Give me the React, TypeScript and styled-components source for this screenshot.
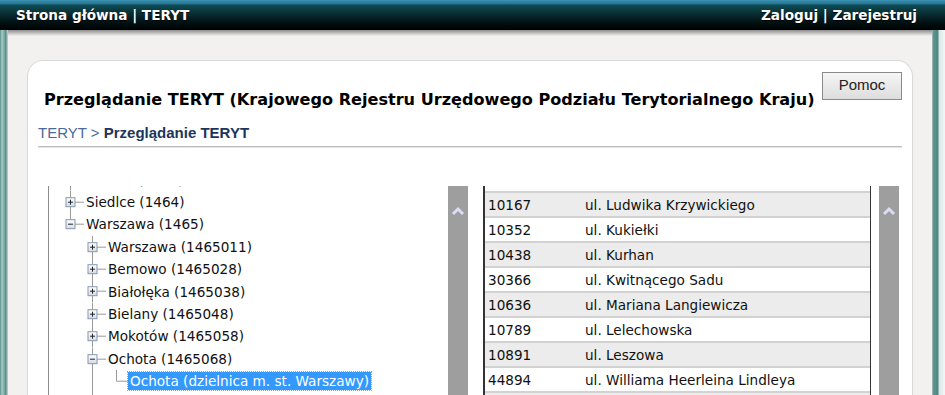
import React from 'react';
import styled, { createGlobalStyle } from 'styled-components';

const GlobalStyle = createGlobalStyle`
  html, body {
    margin: 0;
    padding: 0;
    overflow: hidden;
    background: #f2f1ef;
  }
  body {
    font-family: "DejaVu Sans", Verdana, sans-serif;
  }
`;

type TreeRow = {
  label: string;
  lines: boolean[];
  hasNext: boolean;
  icon: 'plus' | 'minus' | 'leaf';
  selected?: boolean;
};

const treeRows: TreeRow[] = [
  { label: 'Radom (1463)', lines: [], hasNext: true, icon: 'plus' },
  { label: 'Siedlce (1464)', lines: [], hasNext: true, icon: 'plus' },
  { label: 'Warszawa (1465)', lines: [], hasNext: false, icon: 'minus' },
  { label: 'Warszawa (1465011)', lines: [false], hasNext: true, icon: 'plus' },
  { label: 'Bemowo (1465028)', lines: [false], hasNext: true, icon: 'plus' },
  { label: 'Białołęka (1465038)', lines: [false], hasNext: true, icon: 'plus' },
  { label: 'Bielany (1465048)', lines: [false], hasNext: true, icon: 'plus' },
  { label: 'Mokotów (1465058)', lines: [false], hasNext: true, icon: 'plus' },
  { label: 'Ochota (1465068)', lines: [false], hasNext: true, icon: 'minus' },
  { label: 'Ochota (dzielnica m. st. Warszawy)', lines: [false, true], hasNext: false, icon: 'leaf', selected: true },
  { label: 'Praga-Południe (1465078)', lines: [false], hasNext: true, icon: 'plus' },
];

const streets = [
  ['10167', 'ul. Ludwika Krzywickiego'],
  ['10352', 'ul. Kukiełki'],
  ['10438', 'ul. Kurhan'],
  ['30366', 'ul. Kwitnącego Sadu'],
  ['10636', 'ul. Mariana Langiewicza'],
  ['10789', 'ul. Lelechowska'],
  ['10891', 'ul. Leszowa'],
  ['44894', 'ul. Williama Heerleina Lindleya'],
  ['11262', 'ul. Łęczycka'],
];

const ROW_H = 22.4;
const LINE = '#9a9a9a';

const Page = styled.div`
  display: flex;
  flex-direction: column;
  height: 395px;
  width: 945px;
`;

const TopBar = styled.div`
  height: 30px;
  flex: none;
  display: flex;
  align-items: center;
  justify-content: space-between;
  padding: 0 28px 0 16px;
  background: linear-gradient(
    180deg,
    #3d93b3 0,
    #24718f 4px,
    #0e4b54 5px,
    #0a3439 12px,
    #031517 21px,
    #000 30px
  );
  color: #fff;
  font-family: "DejaVu Sans", Verdana, sans-serif;
  font-weight: bold;
  font-size: 13.6px;
  text-shadow: 0 1px 1px #000;
  box-sizing: border-box;
`;

const BarLinks = styled.div`
  margin-top: -1px;
`;

const Body = styled.div`
  flex: 1;
  display: flex;
  min-height: 0;
`;

const LeftEdge = styled.div`
  width: 8px;
  background: linear-gradient(90deg, #5b928d 0, #a7c9c3 2px, #7eb0a9 4px, #4f8883 6px, #b9c4c2 7px);
`;

const RightEdge = styled.div`
  width: 13px;
  background: linear-gradient(90deg, #c9cfce 0, #5f9790 1px, #4d857f 6px, #dce7e5 7px, #f4f7f7 13px);
`;

const Content = styled.div`
  flex: 1;
  background: #f2f1ef;
  display: flex;
  flex-direction: column;
  overflow: hidden;
`;

const Shade = styled.div`
  height: 6px;
  flex: none;
  background: linear-gradient(180deg, #8d8d8d, #f2f1ef);
`;

const Card = styled.div`
  margin: 24px 19px 0 19px;
  background: #fff;
  border: 1px solid #d9d9d9;
  border-bottom: none;
  border-radius: 16px 16px 0 0;
  padding: 11px 10px 0 10px;
  flex: 1;
`;

const Header = styled.div`
  display: flex;
  justify-content: space-between;
  align-items: flex-start;
  height: 37px;
`;

const Title = styled.h1`
  margin: 19px 0 0 6px;
  font-family: "DejaVu Sans", Verdana, sans-serif;
  font-size: 16.1px;
  line-height: 18px;
  font-weight: bold;
  color: #000;
  white-space: nowrap;
`;

const HelpButton = styled.button`
  width: 80px;
  height: 28px;
  flex: none;
  border: 1px solid #8a8a8a;
  background: linear-gradient(180deg, #f6f6f6, #dddddd);
  font-family: "Liberation Sans", Arial, sans-serif;
  font-size: 15px;
  color: #222;
  padding: 0 0 3px 0;
  margin: 0;
`;

const Crumbs = styled.div`
  margin-top: 15px;
  line-height: 18px;
  font-family: "Liberation Sans", Arial, sans-serif;
  font-size: 15px;
  color: #4a6a98;
`;

const CrumbCurrent = styled.span`
  color: #1c355c;
  font-weight: bold;
`;

const Rule = styled.div`
  margin-top: 4px;
  border-top: 1px solid #bdbdbd;
  border-bottom: 1px solid #e4e4e4;
`;

const Panels = styled.div`
  margin: 38px 0 0 10px;
  display: flex;
  height: 260px;
`;

const TreeBox = styled.div`
  width: 389px;
  border-left: 1px solid #8c8c8c;
  padding-left: 10px;
  overflow: hidden;
`;

const TreeList = styled.div`
  margin-top: -17.6px;
`;

const Row = styled.div`
  display: flex;
  align-items: center;
  height: ${ROW_H}px;
  font-size: 13.6px;
  color: #111;
  white-space: nowrap;
`;

const Label = styled.span<{ $selected?: boolean }>`
  line-height: 18px;
  padding: 0 2px;
  margin-left: -2px;
  background: ${(p) => (p.$selected ? '#3399ff' : 'transparent')};
  color: ${(p) => (p.$selected ? '#fff' : '#111')};
  outline: ${(p) => (p.$selected ? '1px dotted #7fa7d8' : 'none')};
`;

const Scroll = styled.div<{ $gap: number }>`
  width: 20px;
  flex: none;
  margin-left: ${(p) => p.$gap}px;
  background: #9e9e9e;
  display: flex;
  justify-content: center;
  align-items: flex-start;
  padding-top: 20px;
  box-sizing: border-box;
`;

const TableBox = styled.div`
  width: 385px;
  flex: none;
  margin-left: 15px;
  border-left: 2px solid #333;
  border-right: 1px solid #333;
  padding-top: 5px;
`;

const Table = styled.table`
  width: 100%;
  border-collapse: collapse;
  font-family: "DejaVu Sans", Verdana, sans-serif;
  font-size: 13.6px;
  color: #111;
`;

const Tr = styled.tr<{ $odd: boolean }>`
  height: 25px;
  background: ${(p) => (p.$odd ? '#ececec' : '#fff')};
  border-top: 2px solid #d2d2d2;
`;

const Code = styled.td`
  width: 97px;
  padding: 0 0 0 3px;
`;

const Name = styled.td`
  padding: 0;
  white-space: nowrap;
`;

const Indent = ({ line }: { line: boolean }) => (
  <svg width="22" height={ROW_H} viewBox={`0 0 22 ${ROW_H}`} style={{ flex: 'none' }}>
    {line && <line x1="11.5" y1="0" x2="11.5" y2={ROW_H} stroke={LINE} />}
  </svg>
);

const Connector = ({ icon, hasNext }: { icon: TreeRow['icon']; hasNext: boolean }) => {
  const mid = ROW_H / 2;
  const cx = icon === 'leaf' ? 13.5 : 11.5;
  return (
    <svg width="27" height={ROW_H} viewBox={`0 0 27 ${ROW_H}`} style={{ flex: 'none' }}>
      <defs>
        <linearGradient id="boxfill" x1="0" y1="0" x2="0" y2="1">
          <stop offset="0" stopColor="#ffffff" />
          <stop offset="1" stopColor="#d5dbe4" />
        </linearGradient>
      </defs>
      <line x1={cx} y1="0" x2={cx} y2={hasNext ? ROW_H : mid} stroke={LINE} />
      <line x1={cx} y1={mid} x2="25" y2={mid} stroke={LINE} />
      {icon !== 'leaf' && (
        <g>
          <rect x={cx - 4.5} y={mid - 4.5} width="9" height="9" fill="url(#boxfill)" stroke="#8598b1" />
          <line x1={cx - 2.5} y1={mid} x2={cx + 2.5} y2={mid} stroke="#222" />
          {icon === 'plus' && <line x1={cx} y1={mid - 2.5} x2={cx} y2={mid + 2.5} stroke="#222" />}
        </g>
      )}
    </svg>
  );
};

const Chevron = () => (
  <svg width="14" height="10" viewBox="0 0 14 10">
    <polyline points="2,8 7,3 12,8" fill="none" stroke="#dcdcf6" strokeWidth="3" />
  </svg>
);

const App = () => (
  <Page>
    <GlobalStyle />
    <TopBar>
      <BarLinks>Strona główna | TERYT</BarLinks>
      <BarLinks>Zaloguj | Zarejestruj</BarLinks>
    </TopBar>
    <Body>
      <LeftEdge />
      <Content>
        <Shade />
        <Card>
          <Header>
            <Title>Przeglądanie TERYT (Krajowego Rejestru Urzędowego Podziału Terytorialnego Kraju)</Title>
            <HelpButton>Pomoc</HelpButton>
          </Header>
          <Crumbs>
            TERYT &gt; <CrumbCurrent>Przeglądanie TERYT</CrumbCurrent>
          </Crumbs>
          <Rule />
          <Panels>
            <TreeBox>
              <TreeList>
                {treeRows.map((r, i) => (
                  <Row key={i}>
                    {r.lines.map((l, j) => (
                      <Indent key={j} line={l} />
                    ))}
                    <Connector icon={r.icon} hasNext={r.hasNext} />
                    <Label $selected={r.selected}>{r.label}</Label>
                  </Row>
                ))}
              </TreeList>
            </TreeBox>
            <Scroll $gap={0}>
              <Chevron />
            </Scroll>
            <TableBox>
              <Table>
                <tbody>
                  {streets.map(([code, name], i) => (
                    <Tr key={code} $odd={i % 2 === 0}>
                      <Code>{code}</Code>
                      <Name>{name}</Name>
                    </Tr>
                  ))}
                </tbody>
              </Table>
            </TableBox>
            <Scroll $gap={8}>
              <Chevron />
            </Scroll>
          </Panels>
        </Card>
      </Content>
      <RightEdge />
    </Body>
  </Page>
);

export default App;
